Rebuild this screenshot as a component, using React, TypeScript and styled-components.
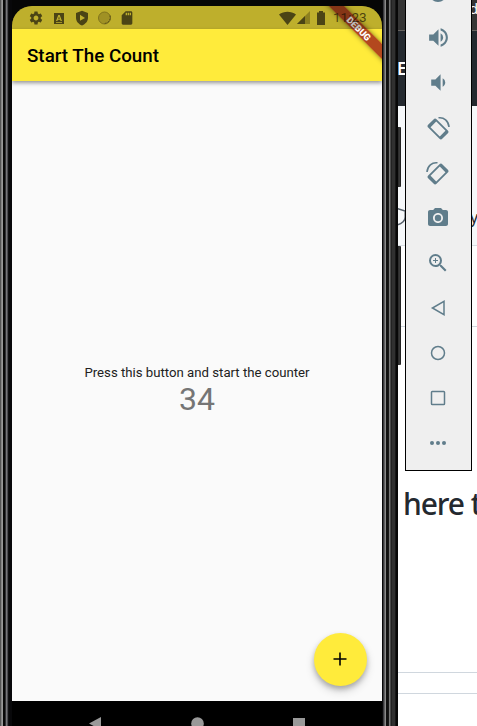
import React from "react";
import styled, { createGlobalStyle } from "styled-components";
import {
  MdSettings,
  MdVolumeUp,
  MdVolumeDown,
  MdPhotoCamera,
  MdZoomIn,
  MdPowerSettingsNew,
  MdSdCard,
} from "react-icons/md";

const GlobalStyle = createGlobalStyle`
  * { box-sizing: border-box; }
  body { margin: 0; overflow: hidden; background: #fff; }
`;

const Desktop = styled.main`
  position: relative;
  width: 477px;
  height: 726px;
  overflow: hidden;
  font-family: Roboto, sans-serif;
`;

/* Browser page behind the emulator */
const BrowserPage = styled.section`
  display: flex;
  flex-direction: column;
  margin-left: 397px;
  height: 726px;
  background: #fff;
  color: #24292f;
  font-family: "Noto Sans", sans-serif;
  white-space: nowrap;
  overflow: hidden;
`;

const BrowserBar = styled.div`
  height: 31px;
  flex: none;
  background: #353535;
  border-bottom: 1px solid #66625f;
  color: #fff;
  font-size: 15px;
  line-height: 16px;
  padding-left: 72px;
`;

const SiteHeader = styled.div`
  height: 75px;
  flex: none;
  background: #24292f;
  color: #fff;
  font-size: 17px;
  font-weight: 600;
  line-height: 75px;
`;

const RepoHeader = styled.div`
  display: flex;
  align-items: center;
  justify-content: space-between;
  height: 140px;
  flex: none;
  padding-top: 83px;
  background: #f6f8fa;
  border-bottom: 1px solid #d8dee4;
  font-size: 16px;
  svg { margin-left: -3px; }
`;

const RepoTail = styled.span`
  width: 7px;
  line-height: 22px;
`;

const PageBlock = styled.div<{ $height: number }>`
  height: ${(p) => p.$height}px;
  flex: none;
  border-bottom: 1px solid #d0d7de;
`;

const Article = styled(PageBlock)`
  padding: 154px 0 0 6px;
  font-size: 30px;
  font-weight: 500;
  letter-spacing: -1.1px;
  line-height: 46px;
`;

/* Phone window */
const Phone = styled.section`
  position: absolute;
  inset: 0 auto 0 0;
  display: grid;
  grid-template-columns: 12px 370px 16px;
  background: #060606;
`;

const LeftRail = styled.div`
  background: linear-gradient(90deg,
    #555 0 1px, #858585 1px 2px, #999 2px 3px, #080808 3px 5px, #303033 5px 6px,
    #77777a 6px 7px, #4b4b50 7px 8px, #111113 8px 9px, #08080a 9px);
`;

const RightRail = styled.div`
  background: linear-gradient(90deg,
    #08080a 0 1px, #38383b 1px 2px, #606062 2px 3px, #8a8a8a 3px 4px, #101010 4px 6px,
    #171717 6px 7px, #777 7px 8px, #494949 8px 9px, #222 9px 10px, #303030 10px 13px,
    #171717 13px 14px, #080808 14px);
`;

const SideButton = styled.div<{ $top: number; $height: number }>`
  position: absolute;
  left: 397px;
  top: ${(p) => p.$top}px;
  width: 4px;
  height: ${(p) => p.$height}px;
  border-radius: 0 1px 1px 0;
  background: linear-gradient(90deg, #181818, #3a3a3a 60%, #181818);
`;

const Bezel = styled.div`
  display: flex;
  flex-direction: column;
  padding-top: 6px;
  background: #060606;
`;

const Screen = styled.div`
  position: relative;
  display: flex;
  flex-direction: column;
  height: 695px;
  flex: none;
  overflow: hidden;
  border-radius: 20px 20px 0 0;
  background: #ffeb3b;
`;

/* The scrim is translucent and sits above the debug ribbon */
const StatusBar = styled.div`
  position: relative;
  z-index: 2;
  display: flex;
  align-items: center;
  justify-content: space-between;
  height: 23px;
  flex: none;
  padding: 0 15px 0 16px;
  background: rgba(0, 0, 0, 0.255);
  color: #4b4415;
`;

const StatusIcons = styled.div`
  display: flex;
  align-items: center;
  gap: 7px;
  svg { display: block; }
  svg:last-child { margin-left: -1px; }
`;

const Signals = styled.div`
  display: flex;
  align-items: center;
  svg { display: block; }
  svg:first-child { margin-right: -1px; }
  svg:nth-child(2) { margin-right: 1px; }
`;

const Clock = styled.time`
  width: 34px;
  margin-left: 6px;
  color: rgba(20, 12, 0, 0.68);
  font-size: 13.5px;
  line-height: 23px;
`;

const AppBar = styled.header`
  position: relative;
  height: 52px;
  flex: none;
  padding-left: 15px;
  background: #ffeb3b;
  box-shadow: 0 2px 4px rgba(0, 0, 0, 0.4);
  color: #000;
  font-size: 18.8px;
  font-weight: 500;
  line-height: 54px;
`;

const CounterBody = styled.div`
  display: flex;
  flex: 1;
  flex-direction: column;
  align-items: center;
  justify-content: center;
  background: #fafafa;
`;

const Prompt = styled.p`
  margin: 0;
  padding-top: 1px;
  color: #212121;
  font-size: 13.2px;
  line-height: 16px;
`;

const Count = styled.strong`
  color: #757575;
  font-size: 32px;
  font-weight: 400;
  line-height: 37px;
`;

const AddButton = styled.button`
  position: absolute;
  right: 15px;
  bottom: 15px;
  display: grid;
  place-items: center;
  width: 53px;
  height: 53px;
  padding: 0 1px 1px 0;
  border: 0;
  border-radius: 50%;
  background: #ffeb3b;
  box-shadow: 0 3px 5px rgba(0, 0, 0, 0.22), 0 5px 10px rgba(0, 0, 0, 0.16);
`;

const DebugRibbon = styled.div`
  position: absolute;
  top: 16.5px;
  right: -22px;
  width: 90px;
  height: 11px;
  transform: rotate(45deg);
  background: rgba(165, 40, 25, 0.84);
  box-shadow: 0 0 5px rgba(0, 0, 0, 0.5);
  color: #fff;
  font-size: 9.3px;
  font-weight: 900;
  line-height: 11px;
  text-align: center;
`;

const AndroidNav = styled.nav`
  display: flex;
  flex: 1;
  background: #000;
  svg { display: block; margin: 15px 0 0 89.5px; }
  svg:first-child { margin-left: 76px; }
`;

/* Emulator controls window */
const Controls = styled.aside`
  position: absolute;
  left: 405px;
  top: -31px;
  display: flex;
  flex-direction: column;
  align-items: center;
  width: 67px;
  height: 502px;
  border: 1px solid #000;
  background: #efefef;
`;

const ControlButton = styled.button`
  display: grid;
  place-items: center;
  width: 65px;
  height: 45px;
  flex: none;
  padding: 0 1px 0 0;
  border: 0;
  background: transparent;
  color: #607d8b;
  svg { display: block; }
`;

const RotateIcon = ({ mirrored = false }: { mirrored?: boolean }) => (
  <svg width="24" height="24" viewBox="0 0 24 24" fill="none" stroke="currentColor">
    <g transform={mirrored ? "translate(24 0) scale(-1 1)" : undefined}>
      <g transform="rotate(45 12 13)">
        <rect x="3" y="8" width="18" height="10" rx="1" strokeWidth="1.8" />
        <path d="M4 8v10M20 8v10" strokeWidth="3" />
      </g>
      <path d="M12.5 1.8C18 1 22.5 5 23 11" strokeWidth="1.6" />
    </g>
  </svg>
);

const Outline = ({ children }: { children: React.ReactNode }) => (
  <svg width="24" height="24" viewBox="0 0 24 24" fill="none" stroke="currentColor" strokeWidth="1.5">
    {children}
  </svg>
);

const controls = [
  { name: "Power", icon: <MdPowerSettingsNew size={24} /> },
  { name: "Volume up", icon: <MdVolumeUp size={25} /> },
  { name: "Volume down", icon: <MdVolumeDown size={25} /> },
  { name: "Rotate left", icon: <RotateIcon /> },
  { name: "Rotate right", icon: <RotateIcon mirrored /> },
  { name: "Screenshot", icon: <MdPhotoCamera size={24} /> },
  { name: "Zoom", icon: <MdZoomIn size={24} /> },
  { name: "Back", icon: <Outline><path d="M18 5.3v13.4L6.4 12z" /></Outline> },
  { name: "Home", icon: <Outline><circle cx="12" cy="12" r="6.5" /></Outline> },
  { name: "Overview", icon: <Outline><rect x="5.5" y="5.5" width="13" height="13" rx="0.8" /></Outline> },
  {
    name: "More",
    icon: (
      <svg width="24" height="24" fill="currentColor">
        <circle cx="6" cy="12" r="2" />
        <circle cx="12" cy="12" r="2" />
        <circle cx="18" cy="12" r="2" />
      </svg>
    ),
  },
];

export default function App() {
  return (
    <Desktop>
      <GlobalStyle />
      <BrowserPage>
        <BrowserBar>d</BrowserBar>
        <SiteHeader>E</SiteHeader>
        <RepoHeader>
          <svg width="14" height="20" viewBox="0 0 14 20" fill="none" stroke="#57606a" strokeWidth="1.5">
            <path d="M3 1.5 11.2 4v6c0 4-3 6.5-8.2 8" />
          </svg>
          <RepoTail>y</RepoTail>
        </RepoHeader>
        <PageBlock $height={81} />
        <Article $height={346}>here t</Article>
        <PageBlock $height={21} />
      </BrowserPage>

      <SideButton $top={127} $height={60} />
      <SideButton $top={246} $height={119} />
      <Phone>
        <LeftRail />
        <Bezel>
          <Screen>
            <StatusBar>
              <StatusIcons>
                <MdSettings size={16} />
                <svg width="16" height="16">
                  <path fill="currentColor" fillRule="evenodd" d="M3 3h10v11H3zM7.3 5 5 11h1.4l.4-1.3h2.4l.4 1.3H11L8.7 5zM8 6.5l.8 2.2H7.2zM5 12v.8h6V12z" />
                </svg>
                <svg width="16" height="16">
                  <path fill="currentColor" fillRule="evenodd" d="M8 .8 14 3v4.5c0 4-2.5 6.5-6 8-3.5-1.5-6-4-6-8V3zM6 4.8v6L11 8z" />
                </svg>
                <svg width="16" height="16">
                  <circle cx="7.5" cy="8" r="6" fill="#a09124" stroke="#81741c" />
                  <path d="M13 5.5c1 4-1 7.5-5.5 8" fill="none" stroke="#5c511a" strokeDasharray="2 1" />
                </svg>
                <MdSdCard size={16} />
              </StatusIcons>
              <Signals>
                <svg width="17" height="14">
                  <path fill="currentColor" d="M0 3.5C5-.2 12-.2 17 3.5L8.5 14z" />
                </svg>
                <svg width="17" height="14">
                  <path d="M15 0v13H2z" fill="#8d801f" />
                  <path d="M10 5v8H2z" fill="currentColor" />
                </svg>
                <svg width="14" height="14">
                  <path fill="currentColor" d="M6 0h4v1.5h2V14H4V1.5h2z" />
                </svg>
                <Clock>11:23</Clock>
              </Signals>
            </StatusBar>
            <AppBar>Start The Count</AppBar>
            <CounterBody>
              <Prompt>Press this button and start the counter</Prompt>
              <Count>34</Count>
            </CounterBody>
            <AddButton aria-label="Increment">
              <svg width="14" height="14">
                <path d="M7 .5v13M.5 7h13" stroke="#000" strokeWidth="1.6" />
              </svg>
            </AddButton>
            <DebugRibbon>DEBUG</DebugRibbon>
          </Screen>
          <AndroidNav>
            <svg width="13" height="14"><path d="M13 1v13L1 7.5z" fill="#999" /></svg>
            <svg width="13" height="14"><circle cx="6.5" cy="7.5" r="6.3" fill="#999" /></svg>
            <svg width="13" height="14"><path d="M0 2h12v12H0z" fill="#999" /></svg>
          </AndroidNav>
        </Bezel>
        <RightRail />
      </Phone>

      <Controls>
        {controls.map((c) => (
          <ControlButton key={c.name} aria-label={c.name}>{c.icon}</ControlButton>
        ))}
      </Controls>
    </Desktop>
  );
}
